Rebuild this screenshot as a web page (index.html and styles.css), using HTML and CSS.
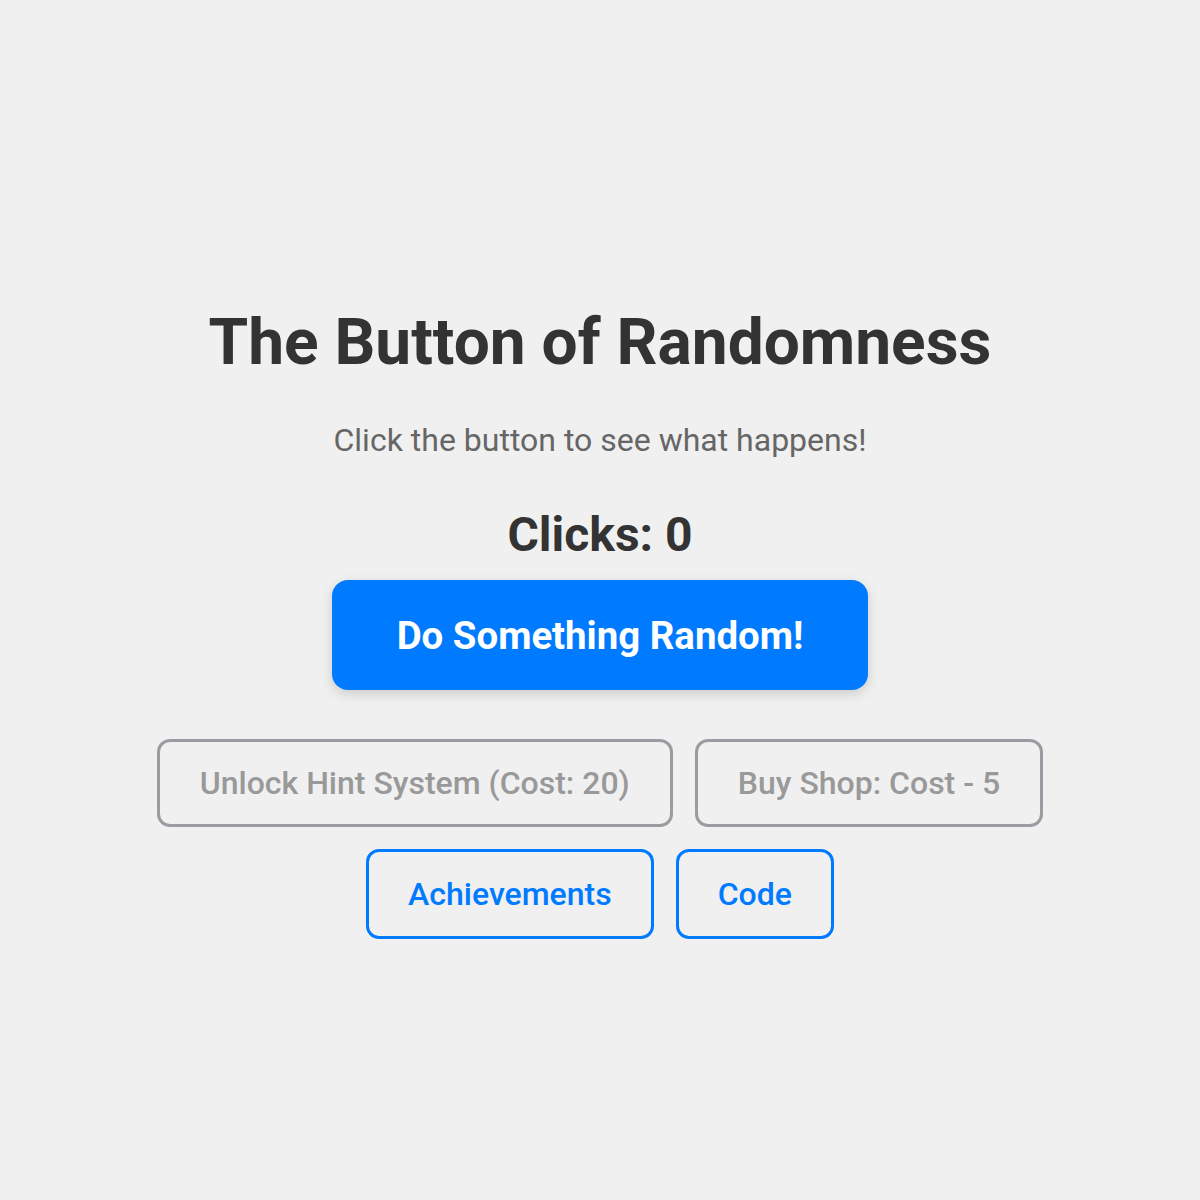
FILE: index.html
```html
<!DOCTYPE html>
<html>
<head>
<meta charset="utf-8">
<link rel="stylesheet" href="styles.css">
</head>
<body>
<main class="game">
  <h1 class="title">The Button of Randomness</h1>
  <p class="subtitle">Click the button to see what happens!</p>
  <div class="clicks">Clicks: 0</div>
  <button class="main-btn">Do Something Random!</button>
  <div class="row row-shop">
    <button class="btn btn-disabled">Unlock Hint System (Cost: 20)</button>
    <button class="btn btn-disabled">Buy Shop: Cost - 5</button>
  </div>
  <div class="row row-links">
    <button class="btn btn-link">Achievements</button>
    <button class="btn btn-link">Code</button>
  </div>
</main>
</body>
</html>
```

FILE: styles.css
```css
html, body {
  margin: 0;
  padding: 0;
  background: #f0f0f0;
}
body {
  font-family: Roboto, "Liberation Sans", sans-serif;
  color: #333;
}
.game {
  display: flex;
  flex-direction: column;
  align-items: center;
  padding-top: 305px;
}
.title {
  margin: 0;
  font-size: 64px;
  font-weight: 700;
  line-height: 75px;
  color: #333;
}
.subtitle {
  margin: 42px 0 0;
  font-size: 32px;
  line-height: 37px;
  color: #666;
}
.clicks {
  margin-top: 48px;
  font-size: 48px;
  font-weight: 700;
  line-height: 56px;
  color: #333;
}
.main-btn {
  margin-top: 17px;
  width: 536px;
  height: 110px;
  border: none;
  border-radius: 16px;
  background: #007bff;
  color: #fff;
  font-family: inherit;
  font-size: 38.4px;
  font-weight: 700;
  box-shadow: 0 4px 12px rgba(0, 0, 0, 0.15);
}
.row {
  display: flex;
  justify-content: center;
  gap: 22px;
}
.row-shop {
  margin-top: 49px;
}
.row-links {
  margin-top: 22px;
}
.btn {
  font-family: inherit;
  font-size: 32px;
  font-weight: 500;
  background: transparent;
  border: 3px solid;
  border-radius: 13px;
  padding: 0 40px;
}
.btn-disabled {
  height: 88px;
  color: #999;
  border-color: #9a9ca1;
}
.btn-link {
  height: 90px;
  padding: 0 39px;
  color: #007bff;
  border-color: #007bff;
}
```
